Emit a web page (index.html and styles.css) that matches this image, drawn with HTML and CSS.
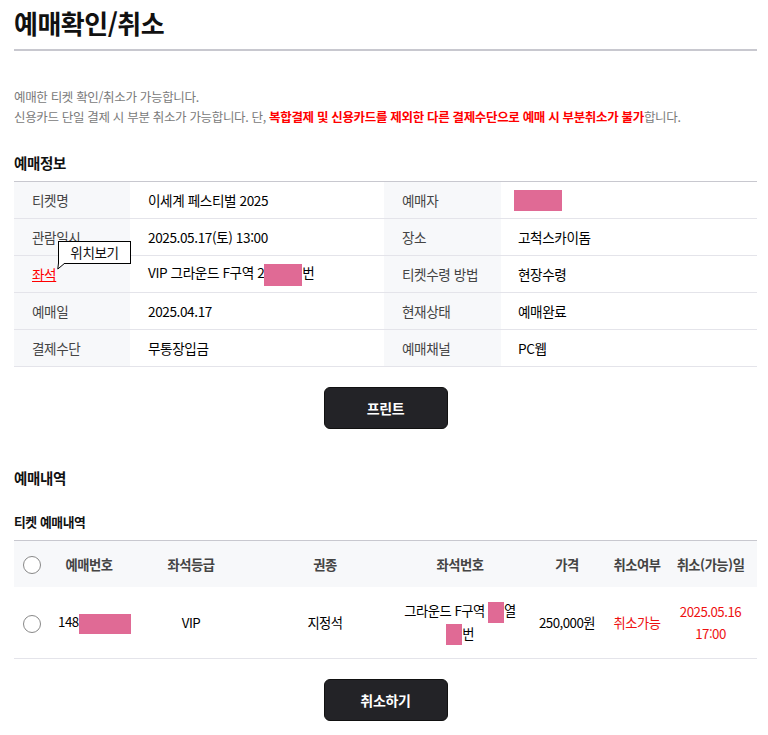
FILE: index.html
```html
<!DOCTYPE html>
<html lang="ko">
<head>
<meta charset="utf-8">
<title>예매확인/취소</title>
<link rel="stylesheet" href="styles.css">
</head>
<body>
<div class="page">
  <h1 class="title">예매확인/취소</h1>
  <div class="notice">
    <p>예매한 티켓 확인/취소가 가능합니다.</p>
    <p>신용카드 단일 결제 시 부분 취소가 가능합니다. 단, <strong class="warn">복합결제 및 신용카드를 제외한 다른 결제수단으로 예매 시 부분취소가 불가</strong>합니다.</p>
  </div>

  <h2 class="sec-title">예매정보</h2>
  <table class="info">
    <colgroup><col class="c1"><col class="c2"><col class="c3"><col class="c4"></colgroup>
    <tr>
      <th>티켓명</th><td>이세계 페스티벌 2025</td>
      <th>예매자</th><td><span class="mask mask-name"></span></td>
    </tr>
    <tr>
      <th>관람일시</th><td>2025.05.17(토) 13:00</td>
      <th>장소</th><td>고척스카이돔</td>
    </tr>
    <tr>
      <th class="seat-cell"><a class="seat-link">좌석</a>
        <span class="tip">위치보기<svg class="tail" width="9" height="7" viewBox="0 0 9 7"><path d="M1.5 0 L0.8 6 L8 0" fill="#fff" stroke="#000" stroke-width="1"/></svg></span>
      </th>
      <td>VIP 그라운드 F구역 2<span class="mask mask-seat"></span>번</td>
      <th>티켓수령 방법</th><td>현장수령</td>
    </tr>
    <tr>
      <th>예매일</th><td>2025.04.17</td>
      <th>현재상태</th><td>예매완료</td>
    </tr>
    <tr>
      <th>결제수단</th><td>무통장입금</td>
      <th>예매채널</th><td>PC웹</td>
    </tr>
  </table>

  <div class="btn-row"><button class="btn">프린트</button></div>

  <h2 class="sec-title sec-2">예매내역</h2>
  <h3 class="sub-title">티켓 예매내역</h3>
  <table class="list">
    <colgroup>
      <col class="k0"><col class="k1"><col class="k2"><col class="k3"><col class="k4"><col class="k5"><col class="k6"><col class="k7">
    </colgroup>
    <thead>
      <tr>
        <th><span class="radio"></span></th>
        <th>예매번호</th><th>좌석등급</th><th>권종</th><th>좌석번호</th><th>가격</th><th>취소여부</th><th>취소(가능)일</th>
      </tr>
    </thead>
    <tbody>
      <tr>
        <td><span class="radio"></span></td>
        <td class="num">148<span class="mask mask-no"></span></td>
        <td>VIP</td>
        <td>지정석</td>
        <td class="seatno">그라운드 F구역 <span class="mask mask-sm"></span>열<br><span class="mask mask-sm"></span>번</td>
        <td>250,000원</td>
        <td class="red">취소가능</td>
        <td class="red date">2025.05.16<br>17:00</td>
      </tr>
    </tbody>
  </table>

  <div class="btn-row"><button class="btn">취소하기</button></div>
</div>
</body>
</html>
```

FILE: styles.css
```css
html, body {
  margin: 0;
  padding: 0;
  background: #fff;
}
body {
  font-family: "Noto Sans CJK KR", "Noto Sans", sans-serif;
  color: #111;
}
.page {
  padding: 0 11px 0 14px;
}
.title {
  margin: 0;
  padding: 6px 0 9px;
  line-height: 34px;
  font-size: 26px;
  font-weight: 700;
  letter-spacing: -0.5px;
  color: #111;
  border-bottom: 2px solid #c8c8cf;
}
.notice {
  margin-top: 36px;
  font-size: 12.5px;
  line-height: 20px;
  color: #7a7a7a;
  letter-spacing: -0.33px;
}
.notice p { margin: 0; }
.warn { color: #ff0000; font-weight: 700; }

.sec-title {
  margin: 26px 0 8px;
  font-size: 14.5px;
  line-height: 20px;
  font-weight: 700;
  letter-spacing: -0.3px;
}
.sec-2 { margin-top: 39px; margin-bottom: 0; }
.sub-title {
  margin: 24px 0 8px;
  font-size: 12.8px;
  line-height: 20px;
  font-weight: 700;
  letter-spacing: -0.4px;
}

table {
  width: 100%;
  border-collapse: collapse;
  table-layout: fixed;
}
.info { border-top: 1px solid #c8c8cf; }
.info .c1 { width: 116px; }
.info .c2 { width: 254px; }
.info .c3 { width: 117px; }
.info .c4 { width: 256px; }
.info th, .info td {
  height: 36px;
  padding: 0 0 0 18px;
  border-bottom: 1px solid #e4e4ea;
  text-align: left;
  font-size: 13.6px;
  letter-spacing: -0.4px;
  vertical-align: middle;
  white-space: nowrap;
}
.info th {
  background: #f7f8fa;
  font-weight: 400;
  color: #444;
}
.info td { color: #000; }
.info td:last-child { padding-left: 17px; }

.mask {
  display: inline-block;
  background: #e06a95;
  vertical-align: middle;
}
.mask-name { width: 48px; height: 21px; margin-left: -4px; }
.mask-seat { width: 38px; height: 22px; }
.mask-no { width: 52px; height: 20px; }
.mask-sm { width: 16px; height: 21px; }

.seat-cell { position: relative; }
.seat-link {
  color: #ff0000;
  text-decoration: underline;
}
.tip {
  position: absolute;
  left: 44px;
  top: -15px;
  width: 71px;
  height: 21px;
  border: 1px solid #000;
  background: #fff;
  color: #111;
  font-size: 13.6px;
  line-height: 21px;
  text-align: center;
  z-index: 2;
}
.tail {
  position: absolute;
  left: -2px;
  top: 21px;
  display: block;
}

.btn-row {
  display: flex;
  justify-content: center;
  margin-top: 20px;
}
.btn {
  width: 124px;
  height: 42px;
  border: 1px solid #111;
  border-radius: 6px;
  background: #232327;
  color: #fff;
  font-family: inherit;
  font-size: 14px;
  font-weight: 700;
  letter-spacing: -0.3px;
  padding: 0;
}

.list { border-top: 1px solid #c8c8cf; }
.list .k0 { width: 36px; }
.list .k1 { width: 78px; }
.list .k2 { width: 126px; }
.list .k3 { width: 142px; }
.list .k4 { width: 128px; }
.list .k5 { width: 86px; }
.list .k6 { width: 54px; }
.list .k7 { width: 93px; }
.list th, .list td {
  padding: 0;
  text-align: center;
  vertical-align: middle;
  font-size: 13.3px;
  letter-spacing: -0.5px;
  white-space: nowrap;
}
.list th:first-child, .list td:first-child { text-align: left; padding-left: 9px; }
.list thead th {
  height: 46px;
  background: #f7f8fa;
  font-weight: 700;
  color: #444;
}
.list tbody td {
  height: 71px;
  border-bottom: 1px solid #e4e4ea;
  line-height: 22px;
  color: #000;
}
.list td.num { text-align: left; padding-left: 8px; }
.list td.red { color: #ee1111; }
.radio {
  display: inline-block;
  width: 16px;
  height: 16px;
  border: 1px solid #888;
  border-radius: 50%;
  background: #fff;
  vertical-align: middle;
}
```
